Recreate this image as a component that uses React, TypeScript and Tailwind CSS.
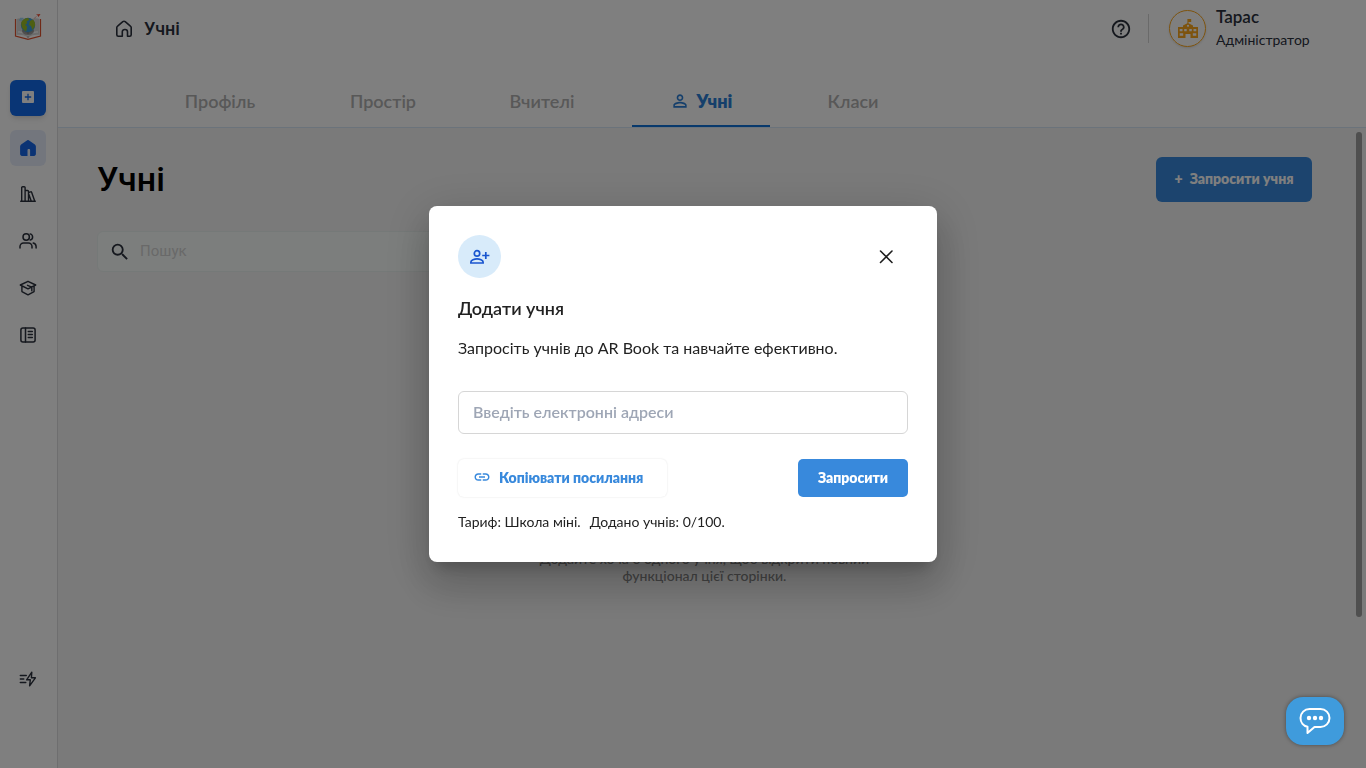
import type { ReactNode } from "react";
import { MdHelpOutline, MdLink, MdPersonOutline, MdSearch } from "react-icons/md";

const stroke = {
  fill: "none",
  stroke: "currentColor",
  strokeWidth: 1.5,
  strokeLinecap: "round",
  strokeLinejoin: "round",
} as const;

function LogoIcon() {
  return (
    <svg viewBox="0 0 28 28" className="h-[28px] w-[28px]" aria-hidden="true">
      <path d="M1.500 6v17L14 26.300 26.500 23V6" fill="none" stroke="#e0522f" strokeWidth="1.200" />
      <path d="M2.500 6c4-1.500 8.500-.5 11.500 2 3-2.500 7.500-3.500 11.500-2v16c-4-.8-8.500.2-11.500 3-3-2.800-7.500-3.800-11.500-3z" fill="#d6d6d6" />
      <path d="M14 9v16" stroke="#a6a6a6" strokeWidth="1" />
      <path d="M4 19c4-.5 7 .5 10 3 3-2.500 6-3.500 10-3" fill="none" stroke="#f8f8f8" strokeWidth="1.500" />
      <ellipse cx="14" cy="18" rx="6" ry="4" fill="#666" opacity=".6" />
      <circle cx="14" cy="12" r="7.200" fill="#3f9fd8" />
      <path d="M7.200 10c.8-3 3.800-5.200 7-5.100l1 2-2.500 1.300.5 2-2 1.500 2 2-1 4.500c-3-.8-5-4-5-8.200zM16 8l3-1.500c1.700 1.700 2.500 4.300 1.900 6.500L18.500 17 17 13l-2-1z" fill="#9dbf24" />
      <path d="M6 5.500h3.500M5 7h3" stroke="#9bd2ee" strokeWidth="1.500" />
      <path d="M22 1.500l4.500-.5L24.500 4l-.8-1.500z" fill="#f04a2f" />
      <path d="M20 5.500l2.500-2" stroke="#f0a08f" strokeWidth=".8" />
    </svg>
  );
}

function HomeIcon() {
  return (
    <svg viewBox="0 0 18 18" className="h-[18px] w-[18px]" aria-hidden="true" {...stroke} strokeWidth={1.6}>
      <path d="M1.800 7.600c0-.6.300-1.200.8-1.500l5.200-4.400a1.900 1.900 0 0 1 2.400 0l5.200 4.400c.5.300.8.900.8 1.500v7.100c0 .8-.7 1.500-1.500 1.500h-2.200v-4.400c0-1.300-1.100-2.300-2.400-2.300h-.400c-1.300 0-2.400 1-2.400 2.300v4.400H3.300c-.8 0-1.500-.7-1.500-1.500z" />
    </svg>
  );
}

function HomeSolidIcon() {
  return (
    <svg viewBox="0 0 16 16" className="h-[16px] w-[16px]" fill="currentColor" aria-hidden="true">
      <path d="M6.900.4a1.800 1.800 0 0 1 2.200 0l5.800 4.200c.6.500 1 1.200 1 2v7.500c0 1-.8 1.800-1.800 1.800h-4V10c0-.6-.5-1.100-1.100-1.100h-.4c-.6 0-1.100.5-1.100 1.100v5.900H1.900c-1 0-1.800-.8-1.800-1.800V6.600c0-.8.400-1.500 1-2z" />
    </svg>
  );
}

function BooksIcon() {
  return (
    <svg viewBox="0 0 16 16" className="h-[16px] w-[16px]" aria-hidden="true" {...stroke} strokeWidth={1.4}>
      <path d="M.7 15.300h14.600M1.700 15.300V1.500c0-.5.400-.8.900-.8h1.600c.5 0 .9.300.9.800v13.800M5.100 4.500h2.500c.5 0 .9.400.9.900v9.900M8.500 6.500l2-.7c.5-.2 1 .1 1.200.6l3 8.700M8.700 8l2.600 7.200" />
    </svg>
  );
}

function UsersIcon() {
  return (
    <svg viewBox="0 0 18 18" className="h-[18px] w-[18px]" aria-hidden="true" {...stroke}>
      <circle cx="7.200" cy="5" r="3.200" />
      <path d="M1 16v-1.500c0-2 1.600-3.600 3.600-3.600h4.800c2 0 3.600 1.600 3.600 3.600V16M11.200 1.900c1.400.4 2.400 1.600 2.400 3.100s-1 2.800-2.400 3.100M14.200 11.100c1.700.4 2.900 1.800 2.900 3.400V16" />
    </svg>
  );
}

function GraduationIcon() {
  return (
    <svg viewBox="0 0 18 18" className="h-[18px] w-[18px]" aria-hidden="true" {...stroke} strokeWidth={1.4}>
      <path d="M9 2.300l7.700 3.700L9 9.800 1.300 6zM2.900 7v5.600L9 15.900l6.100-3.300V7M8.500 6.300l4.300 1.800v3.600" />
    </svg>
  );
}

function JournalIcon() {
  return (
    <svg viewBox="0 0 16 16" className="h-[16px] w-[16px]" aria-hidden="true" {...stroke}>
      <rect x=".9" y=".9" width="14.200" height="14.200" rx="2" />
      <path d="M5.500 1v14M8.300 4.500h4M8.300 7.500h4M8.300 10.500h4" />
    </svg>
  );
}

function BoltIcon() {
  return (
    <svg viewBox="0 0 18 16" className="h-[16px] w-[18px]" aria-hidden="true" {...stroke} strokeWidth={1.4}>
      <path d="M12.800 1.200L7.600 8.800h3.700l-.7 6 5.800-8h-4zM1.300 4.500h6M1.300 8h3.500M1.300 11.500h5.500" />
    </svg>
  );
}

function SchoolIcon() {
  return (
    <svg viewBox="0 0 20 19" className="h-[19px] w-[20px]" aria-hidden="true">
      <path
        fill="#fba61c"
        fillRule="evenodd"
        d="M9.400 0h3.800v3h-2.700v1.200L15 6.500V8h5v11h-7.500v-4h-5v4H0V8h5V6.500l4.400-2.300zM10 5.700a1.100 1.100 0 1 0 0 2.200 1.100 1.100 0 0 0 0-2.200zM1.700 10v2.200h2.800V10zm4.500 0v2.200h2.500V10zm5.100 0v2.200h2.500V10zm4.200 0v2.200h2.800V10zM1.700 14.300v2.500h3.500v-2.500zm13.100 0v2.500h3.500v-2.500z"
      />
    </svg>
  );
}

function PersonPlusIcon() {
  return (
    <svg viewBox="0 0 20 16" className="h-[16px] w-[20px]" fill="none" stroke="#1a56cf" strokeWidth="1.700" aria-hidden="true">
      <circle cx="7" cy="4.400" r="2.700" />
      <path d="M.9 14v-1.100c0-1.900 3.600-3 6.100-3s6.100 1.100 6.100 3V14zM12.200 6.500h7.200M15.800 2.900v7.200" />
    </svg>
  );
}

function ChatIcon() {
  return (
    <svg viewBox="0 0 32 28" className="h-[28px] w-[32px]" aria-hidden="true">
      <path
        d="M10.500 2h11c5 0 9 3.900 9 9s-4 9-9 9h-6l-7 6v-6.200C4.500 19 1.500 15.600 1.500 11c0-5.100 4-9 9-9z"
        fill="none"
        stroke="#fff"
        strokeWidth="2"
        strokeLinejoin="round"
      />
      <g fill="#fff">
        <circle cx="10" cy="11" r="2.200" />
        <circle cx="16" cy="11" r="2.200" />
        <circle cx="22" cy="11" r="2.200" />
      </g>
    </svg>
  );
}

function SideLink({ label, active, children }: { label: string; active?: boolean; children: ReactNode }) {
  return (
    <a
      href="#"
      aria-label={label}
      className={
        active
          ? "flex h-[36px] w-[36px] items-center justify-center rounded-md bg-[#e6edfb] text-[#1667e8]"
          : "flex h-[36px] w-[36px] items-center justify-center rounded-md text-[#2b303c]"
      }
    >
      {children}
    </a>
  );
}

function Sidebar() {
  return (
    <aside className="flex w-[58px] shrink-0 flex-col items-center border-r border-[#dcdcdf] pt-[13px] pr-px pb-[71px]">
      <LogoIcon />
      <button
        type="button"
        aria-label="Створити"
        className="mt-[39px] flex h-[36px] w-[36px] items-center justify-center rounded-md bg-[#126bea] pb-[2px] shadow-md"
      >
        <svg viewBox="0 0 12 12" className="h-[12px] w-[12px]" aria-hidden="true">
          <rect width="12" height="12" rx="1" fill="#fff" />
          <path d="M6 2.800v6.400M2.800 6h6.400" stroke="#126bea" strokeWidth="1.300" />
        </svg>
      </button>
      <nav className="mt-[14px] flex flex-col gap-[10px]">
        <SideLink label="Головна" active>
          <HomeSolidIcon />
        </SideLink>
        <div className="flex flex-col gap-[11px]">
          <SideLink label="Бібліотека">
            <BooksIcon />
          </SideLink>
          <SideLink label="Користувачі">
            <UsersIcon />
          </SideLink>
          <SideLink label="Навчання">
            <GraduationIcon />
          </SideLink>
          <SideLink label="Журнал">
            <JournalIcon />
          </SideLink>
        </div>
      </nav>
      <div className="mt-auto">
        <SideLink label="Оновлення">
          <BoltIcon />
        </SideLink>
      </div>
    </aside>
  );
}

function Header() {
  const tab = "flex items-center justify-center pt-[2px] text-[18px] font-semibold text-[#b0b0b0]";

  return (
    <header className="flex h-[128px] shrink-0 flex-col justify-between border-b border-[#d6e6f7] bg-white">
      <div className="flex h-[57px] items-center justify-between pr-[54px] pl-[57px]">
        <div className="flex items-center gap-[11px] text-[#2b303c]">
          <HomeIcon />
          <span className="font-[Roboto,sans-serif] text-[18px] font-medium">Учні</span>
        </div>
        <div className="flex items-center text-[#2b303c]">
          <button type="button" aria-label="Допомога">
            <MdHelpOutline className="h-[22px] w-[22px]" />
          </button>
          <span className="ml-[16px] h-[29px] w-px bg-[#d4d4d4]" />
          <span className="ml-[20px] flex h-[37px] w-[37px] items-center justify-center rounded-full border border-[#fba61c] shadow-sm">
            <SchoolIcon />
          </span>
          <div className="ml-[10px] flex w-[96px] flex-col gap-[3px] whitespace-nowrap">
            <span className="text-[17px] leading-[20px] font-semibold">Тарас</span>
            <span className="text-[14px] leading-[20px]">Адміністратор</span>
          </div>
        </div>
      </div>
      <nav className="flex h-[54px] pl-[78px]">
        <a href="#" className={`${tab} w-[168px]`}>Профіль</a>
        <a href="#" className={`${tab} w-[158px]`}>Простір</a>
        <a href="#" className={`${tab} w-[160px]`}>Вчителі</a>
        <a
          href="#"
          aria-current="page"
          className="mx-[10px] flex w-[138px] items-center justify-center gap-[7px] border-b-2 border-[#1172d8] pt-[4px] text-[18px] font-extrabold text-[#2b7ed6]"
        >
          <MdPersonOutline className="h-[20px] w-[20px]" />
          Учні
        </a>
        <a href="#" className={`${tab} w-[146px]`}>Класи</a>
      </nav>
    </header>
  );
}

function Students() {
  return (
    <main className="flex flex-1 bg-[#f5f5f5]">
      <div className="flex flex-1 flex-col pt-[29px] pl-[39px]">
        <div className="flex items-center justify-between">
          <h1 className="pb-[2px] font-[Roboto,sans-serif] text-[34px] leading-[42px] font-medium text-black">Учні</h1>
          <button
            type="button"
            className="flex h-[45px] w-[156px] items-center justify-center gap-[7px] rounded-md bg-[#3889dc] pb-[3px] text-[14px] font-extrabold whitespace-nowrap text-white"
          >
            <span>+</span>
            <span>Запросити учня</span>
          </button>
        </div>
        <label className="mt-[29px] flex h-[41px] w-[480px] items-center gap-[9px] rounded-md border border-[#ebf2f0] bg-[#f9fdfb] pl-[11px]">
          <MdSearch className="h-[22px] w-[22px] text-[#2b303c]" />
          <input
            type="search"
            aria-label="Пошук"
            placeholder="Пошук"
            className="flex-1 bg-transparent font-[Roboto,sans-serif] text-[15px] outline-none placeholder:text-[#d2d2d2]"
          />
        </label>
        <p className="mt-[278px] text-center text-[14px] leading-[17px] font-medium text-[#858585]">
          Додайте хоча б одного учня, щоб відкрити повний
          <br />
          функціонал цієї сторінки.
        </p>
      </div>
      <div className="flex w-[54px] justify-end pt-[4px] pr-[4px]">
        <span className="h-[485px] w-[6px] rounded-full bg-[#9e9e9e]" />
      </div>
    </main>
  );
}

function InviteDialog() {
  return (
    <section
      role="dialog"
      aria-labelledby="invite-title"
      className="flex w-[508px] flex-col rounded-lg bg-white px-[29px] pt-[29px] pb-[30px] text-[#222222] shadow-[0_11px_15px_-7px_rgba(0,0,0,0.2),0_24px_38px_3px_rgba(0,0,0,0.14),0_9px_46px_8px_rgba(0,0,0,0.12)]"
    >
      <div className="flex items-center justify-between pr-[10px]">
        <span className="flex h-[43px] w-[43px] items-center justify-center rounded-full bg-[#d8ebfa]">
          <PersonPlusIcon />
        </span>
        <button type="button" aria-label="Закрити">
          <svg viewBox="0 0 24 24" className="h-[24px] w-[24px]" aria-hidden="true">
            <path d="M6.500 6l11.500 11.500M18 6L6.500 17.500" stroke="#1d1d1d" strokeWidth="1.600" strokeLinecap="round" />
          </svg>
        </button>
      </div>
      <h2 id="invite-title" className="mt-[18px] text-[18px] leading-[24px] font-semibold">
        Додати учня
      </h2>
      <p className="mt-[16px] text-[16px] leading-[24px] whitespace-nowrap">
        Запросіть учнів до AR Book та навчайте ефективно.
      </p>
      <input
        type="email"
        aria-label="Введіть електронні адреси"
        placeholder="Введіть електронні адреси"
        className="mt-[31px] h-[43px] rounded-md border border-[#d6d6d6] px-[14px] pb-[3px] text-[16px] font-semibold outline-none placeholder:text-[#9ea6b5]"
      />
      <div className="mt-[25px] flex justify-between text-[14px] font-extrabold">
        <button
          type="button"
          className="flex h-[38px] w-[209px] items-center gap-[8px] rounded-md pb-[2px] pl-[15px] text-[#3889dc] shadow-[0_0_2px_rgba(0,0,0,0.12)]"
        >
          <MdLink className="h-[18px] w-[18px]" />
          Копіювати посилання
        </button>
        <button type="button" className="h-[38px] w-[110px] rounded-[5px] bg-[#3889dc] pb-[2px] text-white">
          Запросити
        </button>
      </div>
      <p className="mt-[15px] flex gap-[9px] text-[14px] leading-[20px]">
        <span>Тариф: Школа міні.</span>
        <span>Додано учнів: 0/100.</span>
      </p>
    </section>
  );
}

export default function App() {
  return (
    <div className="flex min-h-screen bg-white font-['Lato','Noto_Sans',sans-serif]">
      <Sidebar />
      <div className="flex min-w-0 flex-1 flex-col">
        <Header />
        <Students />
      </div>
      <div className="fixed inset-0 flex items-center justify-center bg-black/50">
        <InviteDialog />
      </div>
      <button
        type="button"
        aria-label="Чат"
        className="fixed right-[22px] bottom-[23px] flex h-[48px] w-[58px] items-center justify-center rounded-[17px] bg-[#3f9bdc] shadow-[0_0_4px_rgba(0,0,0,0.4)]"
      >
        <ChatIcon />
      </button>
    </div>
  );
}
